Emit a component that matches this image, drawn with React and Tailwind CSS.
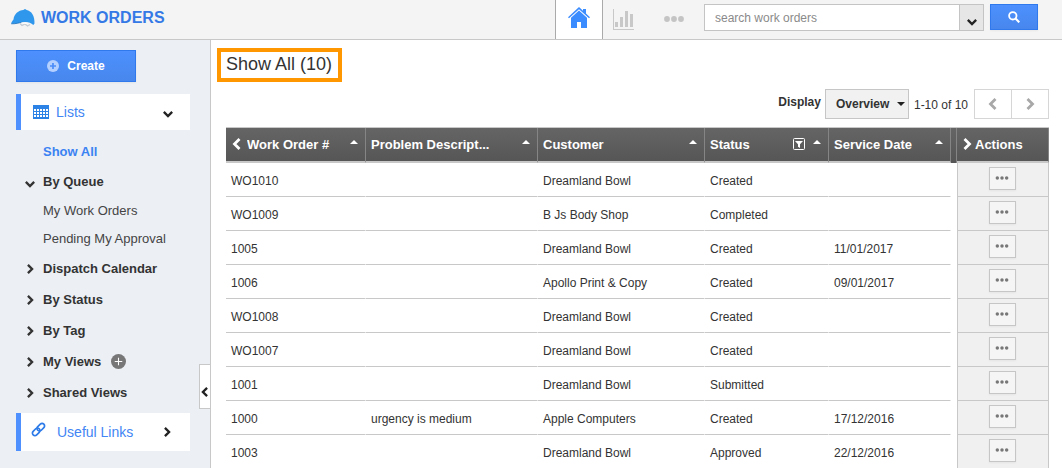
import clsx from "clsx";

const orders = [
    { id: "WO1010", problem: "", customer: "Dreamland Bowl", status: "Created", date: "" },
    { id: "WO1009", problem: "", customer: "B Js Body Shop", status: "Completed", date: "" },
    { id: "1005", problem: "", customer: "Dreamland Bowl", status: "Created", date: "11/01/2017" },
    { id: "1006", problem: "", customer: "Apollo Print & Copy", status: "Created", date: "09/01/2017" },
    { id: "WO1008", problem: "", customer: "Dreamland Bowl", status: "Created", date: "" },
    { id: "WO1007", problem: "", customer: "Dreamland Bowl", status: "Created", date: "" },
    { id: "1001", problem: "", customer: "Dreamland Bowl", status: "Submitted", date: "" },
    { id: "1000", problem: "urgency is medium", customer: "Apple Computers", status: "Created", date: "17/12/2016" },
    { id: "1003", problem: "", customer: "Dreamland Bowl", status: "Approved", date: "22/12/2016" },
];

const chevrons = {
    down: "M1 3.5 L6 8.5 L11 3.5",
    right: "M3.5 1 L8.5 6 L3.5 11",
    left: "M8.5 1 L3.5 6 L8.5 11",
};

function Chevron({ dir, className }) {
    return (
        <svg viewBox="0 0 12 12" fill="none" stroke="currentColor" strokeWidth="2.8" className={className} aria-hidden="true">
            <path d={chevrons[dir]} />
        </svg>
    );
}

function Dots({ className, r = 2.9 }) {
    return (
        <svg viewBox="0 0 20 6" fill="currentColor" className={className} aria-hidden="true">
            <circle cx="3" cy="3" r={r} />
            <circle cx="10" cy="3" r={r} />
            <circle cx="17" cy="3" r={r} />
        </svg>
    );
}

function SortArrow() {
    return (
        <svg viewBox="0 0 8 4" className="mb-1 h-1 w-2 shrink-0" fill="currentColor" aria-hidden="true">
            <path d="M4 0 L8 4 H0 Z" />
        </svg>
    );
}

function Logo() {
    return (
        <svg viewBox="0 0 24 18" className="h-[18px] w-6" aria-hidden="true">
            <path d="M2.500 10.500 C3 5 7.500 1.200 12.500 1 L13.200 0.200 H14.800 L15.500 1 C20.500 2 23.800 6.500 23.500 14.500 L22.300 16 C19.500 13 16 12.500 11.500 13.200 C8 14 4.500 15 0.200 14.800 C0 13.500 1.500 12 2.500 10.500 Z" fill="#2f97ec" />
            <path d="M0.300 14.800 C4.500 15 8 13.800 11.500 13.200" fill="none" stroke="#2475bd" strokeWidth="0.8" />
            <path d="M9 14.500 L11 16.500 L14 15 L16.500 17 L19 15.500" fill="none" stroke="#c3cbd3" strokeWidth="1.200" />
            <path d="M10.500 13.600 L13.500 14.500 L16.500 14.200" fill="none" stroke="#fff" strokeWidth="1" />
        </svg>
    );
}

function HomeIcon() {
    return (
        <svg viewBox="0 0 22 21" className="h-[21px] w-[22px]" fill="#3b8cff" aria-hidden="true">
            <path d="M11 0 L15 3.700 V2 H18 V6.500 L22 10.200 L21 11.300 L11 2.300 L1 11.300 L0 10.200 Z" />
            <path d="M11 3.600 L19 10.800 V21 H13 V15 H9 V21 H3 V10.800 Z" />
        </svg>
    );
}

function ChartIcon() {
    return (
        <svg viewBox="0 0 21 21" className="h-[21px] w-[21px]" fill="#c8c8c8" aria-hidden="true">
            <path d="M0 0 H1 V20 H21 V21 H0 Z M2 13 H5 V18 H2 Z M7 8 H10 V18 H7 Z M12 2 H15 V18 H12 Z M17 5 H20 V18 H17 Z" />
        </svg>
    );
}

function CalendarIcon() {
    return (
        <svg viewBox="0 0 16 14" className="h-3.5 w-4" aria-hidden="true">
            <rect width="16" height="14" fill="#2d82e6" />
            <path
                d="M1 4h2v2h-2z M4 4h2v2h-2z M7 4h2v2h-2z M10 4h2v2h-2z M13 4h2v2h-2z M1 7h2v2h-2z M4 7h2v2h-2z M7 7h2v2h-2z M10 7h2v2h-2z M13 7h2v2h-2z M1 10h2v2h-2z M4 10h2v2h-2z M7 10h2v2h-2z M10 10h2v2h-2z M13 10h2v2h-2z"
                fill="#fff"
            />
        </svg>
    );
}

function LinkIcon() {
    return (
        <svg viewBox="0 0 15 15" className="mb-1.5 h-[15px] w-[15px]" fill="none" stroke="#2d7be8" strokeWidth="1.700" aria-hidden="true">
            <rect x="-4.300" y="-2.500" width="8.600" height="5" rx="2.500" transform="translate(9.800 5.200) rotate(-45)" />
            <rect x="-4.300" y="-2.500" width="8.600" height="5" rx="2.500" transform="translate(5.200 9.800) rotate(-45)" />
        </svg>
    );
}

function FilterIcon() {
    return (
        <svg viewBox="0 0 12 12" className="mr-2 h-3 w-3 shrink-0" aria-hidden="true">
            <rect x="0.500" y="0.500" width="11" height="11" rx="1" fill="none" stroke="#fff" />
            <path d="M2 3 H10 L7 6.300 V10 L5 8.800 V6.300 Z" fill="#fff" />
        </svg>
    );
}

function PlusCircle({ className, plus }) {
    return (
        <svg viewBox="0 0 14 14" className={className} aria-hidden="true">
            <circle cx="7" cy="7" r="7" fill="currentColor" />
            <path d="M7 3.500 V10.500 M3.500 7 H10.500" stroke={plus} strokeWidth={plus === "#fff" ? 1 : 2} />
        </svg>
    );
}

function SearchIcon() {
    return (
        <svg viewBox="0 0 12 12" className="h-3 w-3" fill="none" stroke="#fff" aria-hidden="true">
            <circle cx="4.800" cy="4.800" r="3.700" strokeWidth="1.800" />
            <path d="M7.500 7.500 L11.300 11.300" strokeWidth="2.200" />
        </svg>
    );
}

function Header() {
    return (
        <header className="flex h-10 shrink-0 items-stretch border-b border-[#c8c8c8] bg-[#f4f4f4]">
            <a href="#" className="flex items-center gap-1.5 pb-1 pl-[11px] text-base font-bold whitespace-nowrap text-[#3579e6]">
                <Logo />
                WORK ORDERS
            </a>
            <nav className="ml-auto flex items-stretch">
                <a href="#" aria-label="Home" className="flex w-12 justify-center border-x border-[#aaa] bg-white pt-[7px]">
                    <HomeIcon />
                </a>
                <a href="#" aria-label="Reports" className="px-2.5 pt-[9px]">
                    <ChartIcon />
                </a>
                <a href="#" aria-label="More" className="px-5 pt-4 text-[#c4c4c4]">
                    <Dots className="h-1.5 w-5" />
                </a>
            </nav>
            <form className="flex items-start pt-1 pr-6">
                <input
                    type="text"
                    aria-label="search work orders"
                    placeholder="search work orders"
                    className="h-[27px] w-64 border border-[#c4c4c4] bg-white px-2.5 text-xs text-[#333] outline-none placeholder:text-[#8a8a8a]"
                />
                <button type="button" aria-label="Search options" className="flex h-[27px] w-6 items-center justify-center border border-l-0 border-[#c4c4c4] bg-[#e6e6e6] pt-2 text-[#222]">
                    <Chevron dir="down" className="h-2.5 w-2.5" />
                </button>
                <button type="button" aria-label="Search" className="ml-1.5 flex h-[26px] w-12 items-center justify-center border border-[#3079ed] bg-linear-to-b from-[#4d90fe] to-[#4787ed] shadow-xs">
                    <SearchIcon />
                </button>
            </form>
        </header>
    );
}

function MenuItem({ label, open, children }) {
    return (
        <li className="flex h-[31px] items-center">
            <a href="#" className="flex items-center gap-2 text-[13px] font-bold text-[#333]">
                <Chevron dir={open ? "down" : "right"} className={clsx("h-2.5 w-2.5", open && "mt-1")} />
                {label}
            </a>
            {children}
        </li>
    );
}

function Sidebar() {
    return (
        <aside className="relative w-[211px] shrink-0 border-r border-[#c8c8c8] bg-[#eceff4] pt-2.5 pr-5 pl-4">
            <button type="button" className="flex h-8 w-[120px] items-center justify-center gap-2 border border-[#3079ed] bg-linear-to-b from-[#4d90fe] to-[#4787ed] text-xs font-bold text-white shadow-xs">
                <PlusCircle className="h-3 w-3 text-[#b4d0ff]" plus="#4b8df9" />
                Create
            </button>

            <a href="#" className="mt-3 flex h-9 items-center border-l-5 border-[#4d90fe] bg-white pr-4 pl-3 text-sm text-[#4285f4]">
                <CalendarIcon />
                <span className="flex-1 pl-[7px]">Lists</span>
                <Chevron dir="down" className="mt-1 h-2.5 w-3 text-[#222]" />
            </a>

            <ul className="pt-[7px] pb-[5px] pl-[9px]">
                <li className="flex h-[29px] items-center pl-[18px]">
                    <a href="#" className="text-[13px] font-bold text-[#3b82f2]">Show All</a>
                </li>
                <MenuItem label="By Queue" open />
                {["My Work Orders", "Pending My Approval"].map((label) => (
                    <li key={label} className="flex h-7 items-center pl-[18px]">
                        <a href="#" className="text-[13px] whitespace-nowrap text-[#444]">{label}</a>
                    </li>
                ))}
                <MenuItem label="Dispatch Calendar" />
                <MenuItem label="By Status" />
                <MenuItem label="By Tag" />
                <MenuItem label="My Views">
                    <button type="button" aria-label="Add view" className="ml-2.5">
                        <PlusCircle className="h-[15px] w-[15px] text-[#777]" plus="#fff" />
                    </button>
                </MenuItem>
                <MenuItem label="Shared Views" />
            </ul>

            <a href="#" className="flex h-[38px] items-center border-l-5 border-[#4d90fe] bg-white pr-[17px] pl-2.5 text-sm text-[#4285f4]">
                <LinkIcon />
                <span className="flex-1 pl-[11px]">Useful Links</span>
                <Chevron dir="right" className="h-2.5 w-3 text-[#222]" />
            </a>

            <button type="button" aria-label="Collapse sidebar" className="absolute top-[324px] right-0 flex h-[45px] w-[11px] items-center justify-center border border-r-0 border-[#c8c8c8] bg-white pt-2.5 text-[#222]">
                <Chevron dir="left" className="h-2.5 w-2.5" />
            </button>
        </aside>
    );
}

function Toolbar() {
    return (
        <div className="flex h-[30px] items-center justify-end text-xs text-[#333]">
            <label htmlFor="display" className="pb-1 font-bold">Display</label>
            <div className="relative ml-1">
                <select id="display" className="h-[30px] w-[84px] appearance-none border border-[#c6c6c6] bg-[#f1f1f1] pl-2.5 text-xs font-bold text-[#333]">
                    <option>Overview</option>
                </select>
                <svg viewBox="0 0 8 4" className="pointer-events-none absolute top-[13px] right-1 h-1 w-2" fill="#222" aria-hidden="true">
                    <path d="M0 0 H8 L4 4 Z" />
                </svg>
            </div>
            <span className="ml-[5px] pt-0.5">1-10 of 10</span>
            <div className="ml-1.5 flex text-[#a8a8a8]">
                <button type="button" aria-label="Previous page" className="flex h-[30px] w-[38px] items-center justify-center border border-[#d6d6d6]">
                    <Chevron dir="left" className="h-3 w-3" />
                </button>
                <button type="button" aria-label="Next page" className="flex h-[30px] w-[37px] items-center justify-center border border-l-0 border-[#d6d6d6]">
                    <Chevron dir="right" className="h-3 w-3" />
                </button>
            </div>
        </div>
    );
}

function HeadCell({ label, first, filter }) {
    return (
        <th className="border-r border-b-2 border-r-[#858585] border-b-[#c8c8c8] px-[5px] text-left">
            <div className="flex items-center pr-0.5">
                {first && <Chevron dir="left" className="mr-1 h-3 w-3 shrink-0" />}
                <span className="flex-1 truncate">{label}</span>
                {filter && <FilterIcon />}
                <SortArrow />
            </div>
        </th>
    );
}

function Cell({ children }) {
    return <td className="truncate border-r border-b border-r-white border-b-[#c8c8c8] px-[5px] pt-0.5">{children}</td>;
}

function OrdersTable() {
    return (
        <table className="w-full table-fixed border-separate border-spacing-0 border-t border-[#c8c8c8] text-xs text-[#333]">
            <colgroup>
                <col className="w-[140px]" />
                <col />
                <col className="w-[167px]" />
                <col className="w-[124px]" />
                <col className="w-[122px]" />
                <col className="w-1.5" />
                <col className="w-[92px]" />
            </colgroup>
            <thead className="text-[13px] text-white">
                <tr className="h-[35px] bg-linear-to-b from-[#656565] to-[#555]">
                    <HeadCell label="Work Order #" first />
                    <HeadCell label="Problem Descript..." />
                    <HeadCell label="Customer" />
                    <HeadCell label="Status" filter />
                    <HeadCell label="Service Date" />
                    <td className="border-r border-r-[#858585]" />
                    <th className="border-r border-b-2 border-r-[#858585] border-b-[#c8c8c8] pl-1 text-left">
                        <div className="flex items-center gap-0.5">
                            <Chevron dir="right" className="h-3 w-3" />
                            Actions
                        </div>
                    </th>
                </tr>
            </thead>
            <tbody>
                {orders.map((o) => (
                    <tr key={o.id} className="h-[34px]">
                        <Cell>{o.id}</Cell>
                        <Cell>{o.problem}</Cell>
                        <Cell>{o.customer}</Cell>
                        <Cell>{o.status}</Cell>
                        <Cell>{o.date}</Cell>
                        <td />
                        <td className="border-x border-b border-[#c8c8c8] bg-[#f0f0f0] pr-0.5 pb-0.5">
                            <button type="button" aria-label={`Actions for ${o.id}`} className="mx-auto flex h-[23px] w-[27px] justify-center border border-[#c6c6c6] bg-[#f5f5f5] pt-2 text-[#777] shadow-xs">
                                <Dots className="h-1 w-3.5" r={2.6} />
                            </button>
                        </td>
                    </tr>
                ))}
            </tbody>
        </table>
    );
}

export default function App() {
    return (
        <div className="flex h-screen flex-col bg-white font-['Liberation_Sans',Arial,sans-serif]">
            <Header />
            <div className="flex min-h-0 flex-1">
                <Sidebar />
                <main className="min-w-0 flex-1 overflow-hidden pt-2 pr-[13px] pl-1.5">
                    <h1 className="inline-block h-[34px] border-4 border-[#ff9800] px-[5px] pr-1.5 text-lg leading-6 text-[#333]">Show All (10)</h1>
                    <div className="flex flex-col gap-2 pt-[7px] pl-[9px]">
                        <Toolbar />
                        <OrdersTable />
                    </div>
                </main>
            </div>
        </div>
    );
}
